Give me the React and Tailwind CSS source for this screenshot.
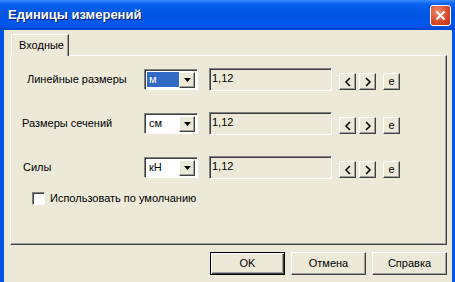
import React from 'react';

const font = { fontFamily: '"Liberation Sans", Arial, sans-serif' };

function SmallButton({ children }) {
  return (
    <div className="w-[17px] h-[17px] bg-[#ece9d8] border-t border-l border-white border-r border-b border-r-[#404040] border-b-[#404040] shadow-[inset_-1px_-1px_0_#a0a0a0] flex items-center justify-center text-[11px] leading-none text-black">
      {children}
    </div>
  );
}

function Arrow({ dir }) {
  return (
    <svg width="8" height="10" viewBox="0 0 8 10">
      {dir === 'left' ? (
        <path d="M6 1 L2 5 L6 9" stroke="black" strokeWidth="1.6" fill="none" />
      ) : (
        <path d="M2 1 L6 5 L2 9" stroke="black" strokeWidth="1.6" fill="none" />
      )}
    </svg>
  );
}

function Row({ label, labelPad, unit, selected }) {
  return (
    <div className="flex items-start h-[23px]">
      <div className="w-[133px] h-[23px] flex items-center" style={{ paddingLeft: labelPad }}>
        <span className="text-[11px] text-black">{label}</span>
      </div>
      {/* combo */}
      <div className="w-[54px] h-[21px] mt-[1px] bg-white border-t border-l border-[#808080] border-r border-b border-r-white border-b-white shadow-[inset_1px_1px_0_#404040] flex items-center p-[2px]">
        <div className={`flex-1 h-[15px] flex items-center pl-[2px] text-[11px] ${selected ? 'bg-[#316ac5] text-white' : 'text-black'}`}>
          {unit}
        </div>
        <div className="w-[16px] h-[16px] bg-[#ece9d8] border-t border-l border-white border-r border-b border-r-[#404040] border-b-[#404040] shadow-[inset_-1px_-1px_0_#a0a0a0] flex items-center justify-center">
          <svg width="7" height="4" viewBox="0 0 7 4">
            <path d="M0 0 H7 L3.5 4 Z" fill="black" />
          </svg>
        </div>
      </div>
      <div className="w-[11px]" />
      {/* value field */}
      <div className="w-[123px] h-[23px] bg-[#ece9d8] border-t border-l border-[#808080] border-r border-b border-r-white border-b-white shadow-[inset_1px_1px_0_#404040] pl-[2px] pt-[2px] text-[11px] leading-[14px] text-black">
        1,12
      </div>
      <div className="w-[7px]" />
      <div className="flex items-center gap-[3px] mt-[5px]">
        <SmallButton><Arrow dir="left" /></SmallButton>
        <SmallButton><Arrow dir="right" /></SmallButton>
        <div className="w-[1px]" />
        <SmallButton><span className="text-[11px]">e</span></SmallButton>
      </div>
    </div>
  );
}

function DlgButton({ children, isDefault }) {
  return (
    <div
      className={`w-[75px] h-[23px] bg-[#ece9d8] flex items-center justify-center text-[11px] text-black ${
        isDefault
          ? 'border border-black shadow-[inset_1px_1px_0_white,inset_-1px_-1px_0_#404040,inset_-2px_-2px_0_#a0a0a0]'
          : 'border-t border-l border-white border-r border-b border-r-[#404040] border-b-[#404040] shadow-[inset_-1px_-1px_0_#a0a0a0]'
      }`}
    >
      {children}
    </div>
  );
}

export default function App() {
  return (
    <div className="w-[455px] h-[282px] bg-[#0054e3] flex flex-col overflow-hidden" style={font}>
      {/* Title bar */}
      <div className="h-[30px] flex items-center justify-between pl-[8px] pr-[4px] bg-[linear-gradient(to_bottom,#3b8cff_0px,#0a62ef_4px,#0054e3_14px,#0058ee_24px,#0046d0_30px)]">
        <span className="text-white font-bold text-[13px] [text-shadow:1px_1px_0_#0a1f6e]">
          Единицы измерений
        </span>
        <div className="w-[21px] h-[21px] rounded-[3px] border border-white bg-[radial-gradient(circle_at_35%_30%,#f08c6c,#d8462a_60%,#b8301c)] flex items-center justify-center">
          <svg width="11" height="11" viewBox="0 0 11 11">
            <path d="M1.5 1.5 L9.5 9.5 M9.5 1.5 L1.5 9.5" stroke="white" strokeWidth="2" />
          </svg>
        </div>
      </div>

      {/* Client area */}
      <div className="flex-1 ml-[4px] mr-[3px] bg-[#ece9d8] flex flex-col pt-[4px]">
        {/* Tabs */}
        <div className="flex pl-[7px] h-[21px]">
          <div className="w-[58px] h-[22px] border-t border-l border-white border-r border-r-[#404040] shadow-[inset_-1px_0_0_#a0a0a0] bg-[#ece9d8] flex items-center pl-[7px] text-[11px] text-black rounded-tl-[2px] relative z-10">
            Входные
          </div>
        </div>
        {/* Panel */}
        <div className="ml-[6px] w-[437px] h-[190px] border-t border-l border-white border-r border-b border-r-[#404040] border-b-[#404040] shadow-[inset_-1px_-1px_0_#a0a0a0] flex flex-col pt-[12px]">
          <div className="flex flex-col gap-[21px]">
            <Row label="Линейные размеры" labelPad={16} unit="м" selected />
            <Row label="Размеры сечений" labelPad={11} unit="см" />
            <Row label="Силы" labelPad={12} unit="кН" />
          </div>
          <div className="flex items-center mt-[11px] pl-[21px] gap-[5px]">
            <div className="w-[13px] h-[13px] bg-white border-t border-l border-[#808080] border-r border-b border-r-white border-b-white shadow-[inset_1px_1px_0_#404040]" />
            <span className="text-[11px] text-black">Использовать по умолчанию</span>
          </div>
        </div>
        {/* Buttons */}
        <div className="flex justify-end gap-[6px] pr-[5px] mt-[7px]">
          <DlgButton isDefault>OK</DlgButton>
          <DlgButton>Отмена</DlgButton>
          <DlgButton>Справка</DlgButton>
        </div>
      </div>
    </div>
  );
}
